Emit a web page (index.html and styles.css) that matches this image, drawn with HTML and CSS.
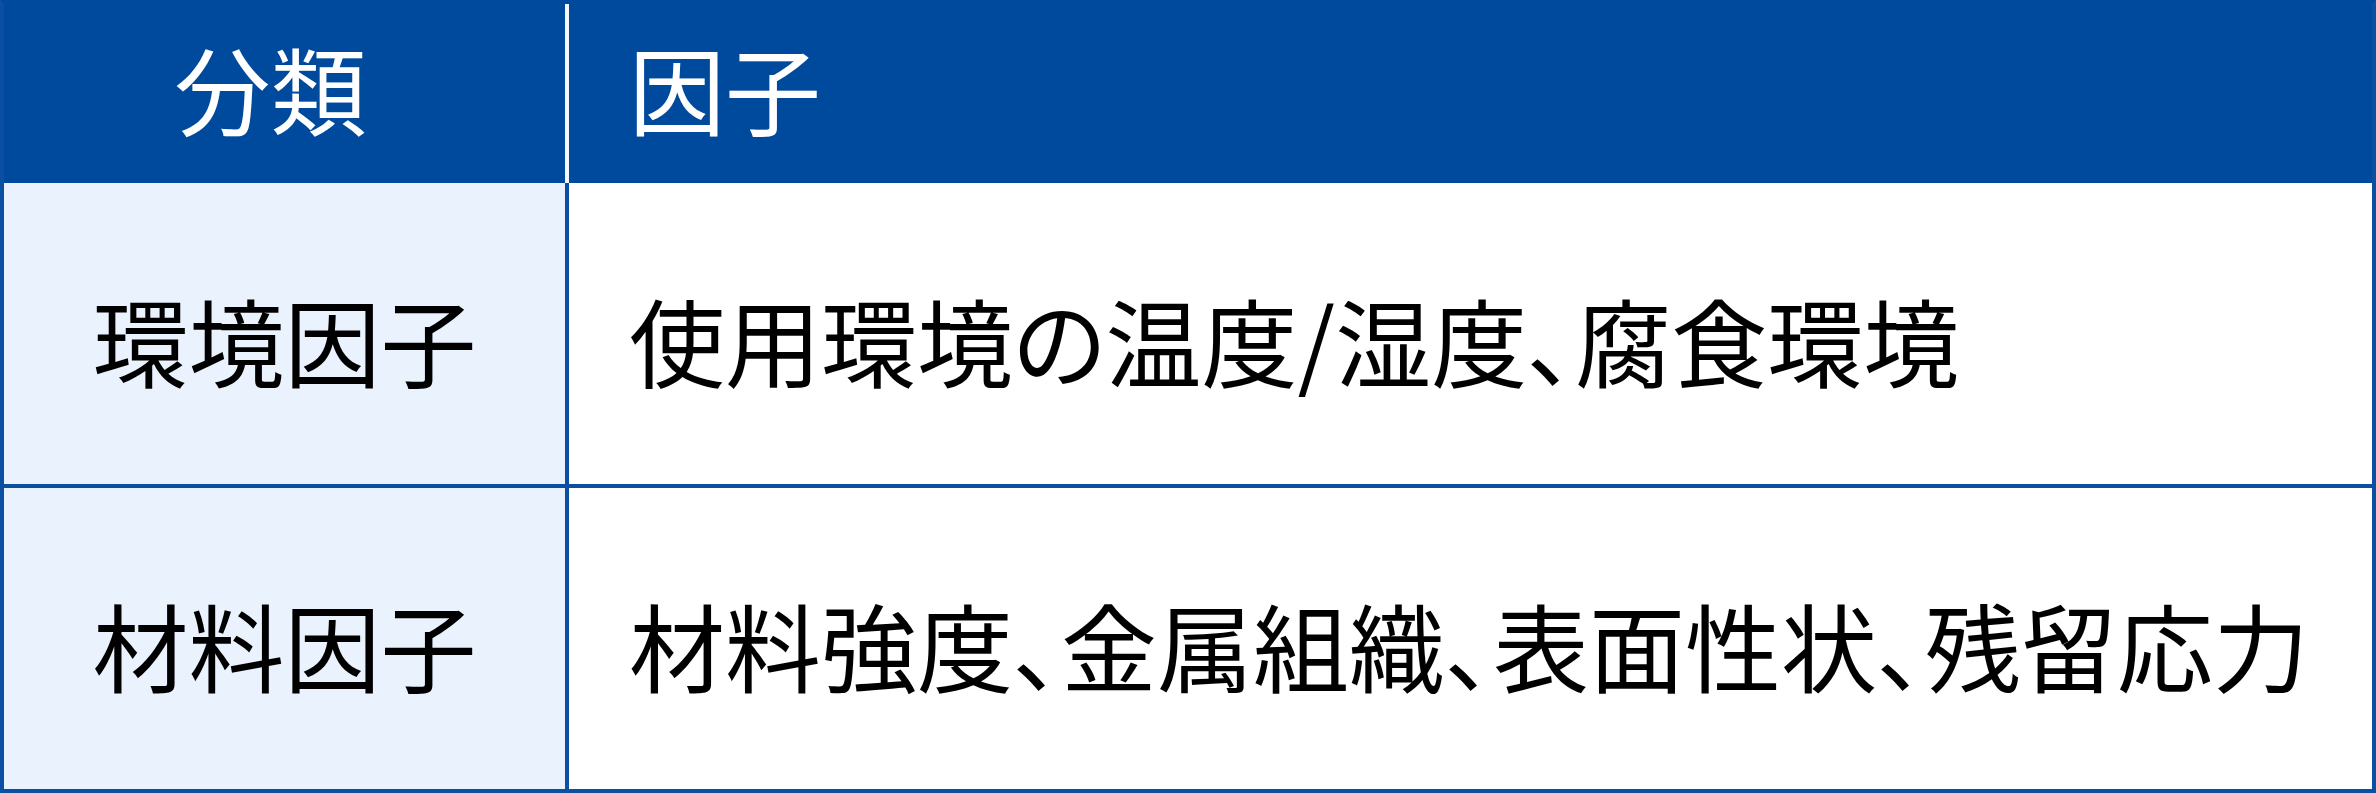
FILE: index.html
```html
<!DOCTYPE html>
<html lang="ja">
<head>
<meta charset="utf-8">
<title>分類と因子</title>
<link rel="stylesheet" href="styles.css">
</head>
<body>
<div class="tbl">
  <div class="row head">
    <div class="cell c1">分類</div>
    <div class="cell c2">因子</div>
  </div>
  <div class="row r1">
    <div class="cell c1">環境因子</div>
    <div class="cell c2">使用環境の温度/湿度、腐食環境</div>
  </div>
  <div class="row r2">
    <div class="cell c1">材料因子</div>
    <div class="cell c2">材料強度、金属組織、表面性状、残留応力</div>
  </div>
</div>
</body>
</html>
```
FILE: styles.css
```css
html, body {
  margin: 0;
  padding: 0;
  background: #ffffff;
}

.tbl {
  width: 2376px;
  height: 793px;
  box-sizing: border-box;
  border: 4px solid #0b4fa3;
  border-top-color: #004a9d;
  display: grid;
  grid-template-rows: 179px 305px 301px;
  font-family: "Noto Sans CJK JP", "Noto Sans", sans-serif;
  font-size: 96px;
  font-weight: 400;
  font-feature-settings: "palt";
  color: #000;
}

.row {
  display: grid;
  grid-template-columns: 565px 1fr;
  box-sizing: border-box;
}

.cell {
  display: flex;
  align-items: center;
  box-sizing: border-box;
  white-space: nowrap;
}

.c1 {
  justify-content: center;
  border-right: 4px solid #0b4fa3;
  background: #eaf2fe;
}

.c2 {
  padding-left: 60px;
  background: #ffffff;
}

.head .cell {
  background: #004a9d;
  color: #ffffff;
  padding-bottom: 14px;
  font-feature-settings: normal;
}

.head .c1 {
  border-right-color: #f4f7fb;
  padding-right: 28px;
}

.r1 {
  border-bottom: 4px solid #0b4fa3;
}

.r1 .cell,
.r2 .cell {
  padding-top: 10px;
}

.r1 .c1,
.r2 .c1 {
  font-feature-settings: normal;
}
```
